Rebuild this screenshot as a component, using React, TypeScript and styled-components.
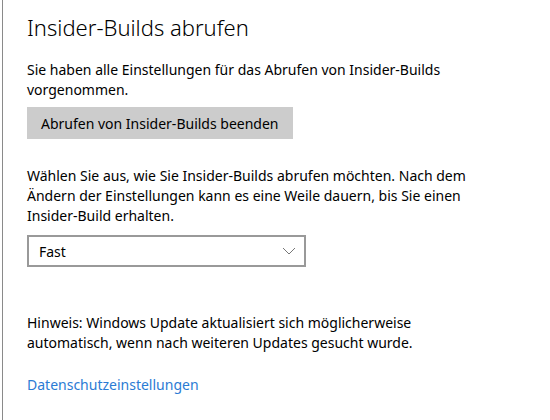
import React from "react";
import styled, { createGlobalStyle } from "styled-components";

const Global = createGlobalStyle`
  html, body { margin: 0; padding: 0; background: #ffffff; }
  body { font-family: "Noto Sans", "Open Sans", sans-serif; color: #000; }
`;

const Page = styled.div`
  width: 550px;
  height: 420px;
  box-sizing: border-box;
  border-left: 1px solid #8a8a8a;
  margin-left: 2px;
  padding: 11px 0 0 24px;
  overflow: hidden;
  display: flex;
  flex-direction: column;
  align-items: flex-start;
`;

const Title = styled.h1`
  margin: 0;
  font-family: "Noto Sans", sans-serif;
  font-weight: 300;
  font-size: 22px;
  line-height: 32px;
  color: #000;
`;

const Text = styled.p<{ $top: number }>`
  margin: ${(p) => p.$top}px 0 0 0;
  font-size: 14px;
  line-height: 20px;
  color: #000;
  max-width: 450px;
`;

const Button = styled.button`
  margin-top: 7px;
  height: 32px;
  padding: 0 14px;
  border: none;
  background: #cccccc;
  font-family: inherit;
  font-size: 14px;
  color: #000;
  cursor: pointer;
`;

const Select = styled.div`
  margin-top: 9px;
  width: 279px;
  height: 32px;
  box-sizing: border-box;
  border: 2px solid #999999;
  display: flex;
  align-items: center;
  justify-content: space-between;
  padding: 0 8px 0 10px;
  font-size: 14px;
`;

const Link = styled.a`
  margin-top: 22px;
  font-size: 14px;
  line-height: 20px;
  color: #2b7bd4;
  text-decoration: none;
`;

export default function App() {
  return (
    <>
      <Global />
      <Page>
        <Title>Insider-Builds abrufen</Title>
        <Text $top={17}>
          Sie haben alle Einstellungen für das Abrufen von Insider-Builds vorgenommen.
        </Text>
        <Button>Abrufen von Insider-Builds beenden</Button>
        <Text $top={27}>
          Wählen Sie aus, wie Sie Insider-Builds abrufen möchten. Nach dem Ändern der
          Einstellungen kann es eine Weile dauern, bis Sie einen Insider-Build erhalten.
        </Text>
        <Select>
          <span>Fast</span>
          <svg width="14" height="8" viewBox="0 0 14 8">
            <path d="M1 1 L7 7 L13 1" fill="none" stroke="#777" strokeWidth="1" />
          </svg>
        </Select>
        <Text $top={46}>
          Hinweis: Windows Update aktualisiert sich möglicherweise automatisch, wenn nach
          weiteren Updates gesucht wurde.
        </Text>
        <Link href="#">Datenschutzeinstellungen</Link>
      </Page>
    </>
  );
}
